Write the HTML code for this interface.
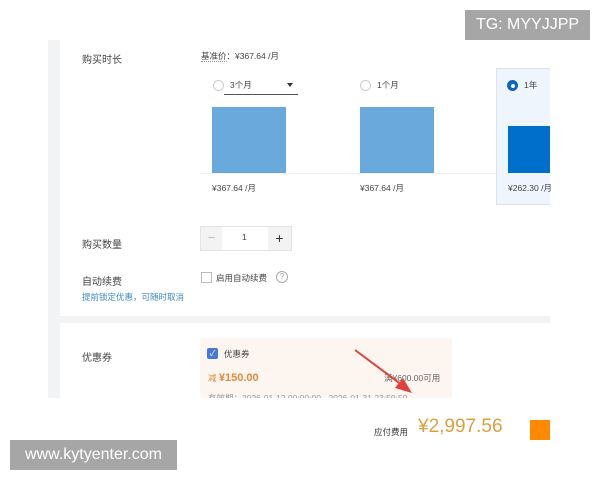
<!DOCTYPE html>
<html><head><meta charset="utf-8"><style>
*{margin:0;padding:0;box-sizing:border-box}
body{width:600px;height:480px;background:#fff;position:relative;overflow:hidden;font-family:"Liberation Sans","Noto Sans CJK SC",sans-serif;color:#333}
.a{position:absolute}
.t{font-size:10px;color:#444;white-space:nowrap}
.s{font-size:8.5px;color:#444;white-space:nowrap}
.radio{position:absolute;width:11px;height:11px;border:1px solid #ccc;border-radius:50%;background:#fff}
</style></head><body>
<div class="a" style="left:48px;top:40px;width:12px;height:358px;background:#f2f3f5"></div>
<div class="a" style="left:60px;top:316px;width:490px;height:7px;background:#f2f3f5"></div>

<div class="a t" style="left:82px;top:51px">购买时长</div>
<div class="a s" style="left:201px;top:50px"><span style="border-bottom:1px dotted #999">基准价</span>：¥367.64 /月</div>

<div class="radio" style="left:213px;top:80px"></div>
<div class="a s" style="left:230px;top:79px">3个月</div>
<div class="a" style="left:287px;top:83px;border-left:3.5px solid transparent;border-right:3.5px solid transparent;border-top:4px solid #333"></div>
<div class="a" style="left:224px;top:94px;width:74px;height:1px;background:#555"></div>
<div class="a" style="left:212px;top:107px;width:74px;height:66px;background:#6aa9dc"></div>

<div class="radio" style="left:360px;top:80px"></div>
<div class="a s" style="left:377px;top:79px">1个月</div>
<div class="a" style="left:360px;top:107px;width:74px;height:66px;background:#6aa9dc"></div>

<div class="a" style="left:496px;top:68px;width:54px;height:137px;background:#eef5fc;border:1px solid #d6e4f2;border-right:none"></div>
<div class="a" style="left:507px;top:80px;width:11px;height:11px;border-radius:50%;background:#0a66c2;"><div style="position:absolute;left:3.5px;top:3.5px;width:4px;height:4px;border-radius:50%;background:#fff"></div></div>
<div class="a s" style="left:524px;top:79px">1年</div>
<div class="a" style="left:508px;top:126px;width:42px;height:47px;background:#006ecb"></div>

<div class="a" style="left:200px;top:173px;width:296px;height:1px;background:#eef0f2"></div>
<div class="a s" style="left:212px;top:182px">¥367.64 /月</div>
<div class="a s" style="left:360px;top:182px">¥367.64 /月</div>
<div class="a s" style="left:508px;top:182px">¥262.30 /月</div>

<div class="a t" style="left:82px;top:236px">购买数量</div>
<div class="a" style="left:200px;top:226px;width:92px;height:25px;border:1px solid #e3e3e3;background:#fff"></div>
<div class="a" style="left:201px;top:227px;width:21px;height:23px;background:#f3f3f3;color:#bbb;font-size:13px;text-align:center;line-height:22px">−</div>
<div class="a" style="left:268px;top:227px;width:23px;height:23px;background:#f3f3f3;color:#333;font-size:14px;text-align:center;line-height:22px">+</div>
<div class="a s" style="left:242px;top:232px">1</div>

<div class="a t" style="left:82px;top:273px">自动续费</div>
<div class="a s" style="left:82px;top:291px;color:#3a8bc8">提前锁定优惠，可随时取消</div>
<div class="a" style="left:201px;top:272px;width:11px;height:11px;border:1px solid #bbb;background:#fff"></div>
<div class="a s" style="left:216px;top:272px">启用自动续费</div>
<div class="a" style="left:276px;top:271px;width:12px;height:12px;border:1px solid #aaa;border-radius:50%;font-size:8px;color:#999;text-align:center;line-height:10px">?</div>

<div class="a t" style="left:82px;top:349px">优惠券</div>
<div class="a" style="left:200px;top:338px;width:252px;height:60px;background:#fdf6f0;border-radius:3px"></div>
<div class="a" style="left:207px;top:348px;width:11px;height:11px;background:#4a78d6;border-radius:2px;color:#fff;font-size:8px;text-align:center;line-height:11px">✓</div>
<div class="a s" style="left:224px;top:348px">优惠券</div>
<div class="a s" style="left:208px;top:372px;color:#e08a3a">减 <b style="font-size:11px">¥150.00</b></div>
<div class="a s" style="left:384px;top:372px;color:#666">满¥600.00可用</div>
<div class="a s" style="left:208px;top:392px;color:#999;height:6px;overflow:hidden">有效期：2026-01-12 00:00:00 - 2026-01-31 23:59:59</div>
<svg class="a" style="left:350px;top:345px" width="90" height="60"><line x1="5" y1="5" x2="52" y2="40" stroke="#e0413c" stroke-width="2"/><polygon points="62,48 45,43 53,33" fill="#e0413c"/></svg>
<div class="a" style="left:0;top:398px;width:600px;height:82px;background:#fff"></div>

<div class="a s" style="left:374px;top:426px;color:#333">应付费用</div>
<div class="a" style="left:418px;top:416px;font-size:19px;color:#d9a040;white-space:nowrap">¥2,997.56</div>
<div class="a" style="left:530px;top:420px;width:20px;height:20px;background:#ff8a00"></div>

<div class="a" style="left:465px;top:10px;width:125px;height:30px;background:#a6a6a6;color:#fff;font-size:16px;line-height:30px;text-align:center">TG: MYYJJPP</div>
<div class="a" style="left:10px;top:440px;width:167px;height:30px;background:#a6a6a6;color:#fff;font-size:16px;line-height:30px;text-align:center">www.kytyenter.com</div>
</body></html>
